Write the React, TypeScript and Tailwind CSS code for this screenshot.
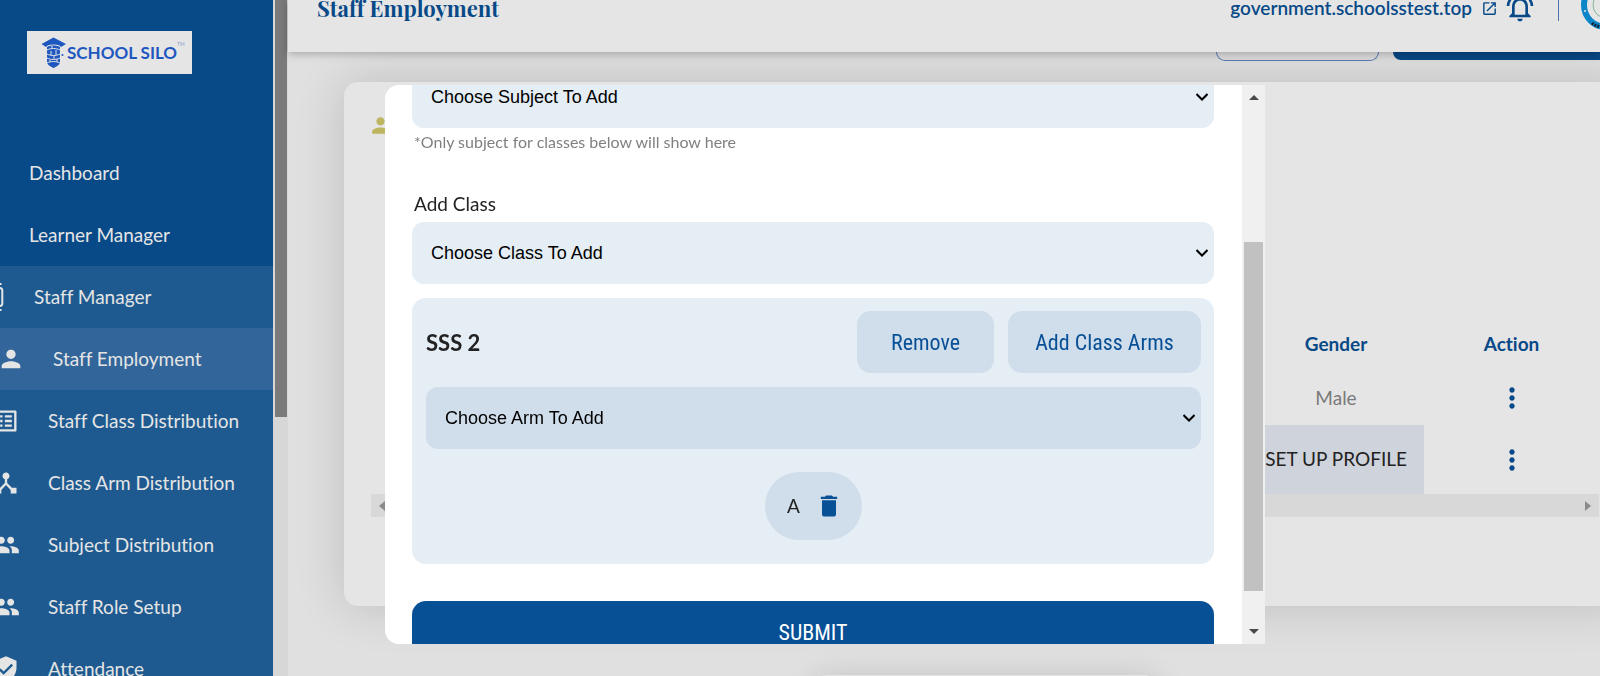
import type { ReactNode } from "react";
import {
  MdDelete,
  MdDeviceHub,
  MdGroup,
  MdMoreVert,
  MdOpenInNew,
  MdOutlineListAlt,
  MdOutlineNotificationsActive,
  MdPerson,
  MdVerifiedUser,
} from "react-icons/md";
import clsx from "clsx";

type NavItem = {
  label: string;
  icon?: ReactNode;
  className: string;
};

function StaffIcon() {
  return (
    <svg viewBox="0 0 28 28" width="1em" height="1em" fill="none" stroke="currentColor" strokeWidth="2" aria-hidden="true">
      <rect x="4" y="5" width="22.3" height="18" rx="2.5" />
      <path d="M24.5 0v2M24.5 26v2M6 0v2M6 26v2" />
    </svg>
  );
}

const mainNav: NavItem[] = [
  { label: "Dashboard", className: "pl-[29px]" },
  { label: "Learner Manager", className: "pl-[29px]" },
];

const staffNav: NavItem[] = [
  { label: "Staff Manager", icon: <StaffIcon />, className: "-ml-[24px] gap-[30px]" },
  { label: "Staff Employment", icon: <MdPerson />, className: "-ml-[3px] gap-[28px] bg-[#32659a]" },
  { label: "Staff Class Distribution", icon: <MdOutlineListAlt />, className: "-ml-[8px] gap-[28px]" },
  { label: "Class Arm Distribution", icon: <MdDeviceHub />, className: "-ml-[8px] gap-[28px]" },
  { label: "Subject Distribution", icon: <MdGroup />, className: "-ml-[8px] gap-[28px]" },
  { label: "Staff Role Setup", icon: <MdGroup />, className: "-ml-[8px] gap-[28px]" },
  { label: "Attendance", icon: <MdVerifiedUser />, className: "-ml-[8px] gap-[28px]" },
];

function Logo() {
  return (
    <div className="flex h-[43px] w-[165px] items-center bg-[#e5e5e5] pl-[14px] text-[#1f57c0]">
      <svg viewBox="0 0 26 32" className="h-8 w-[26px] shrink-0" fill="currentColor" aria-hidden="true">
        <path d="M12.500 0.500 0.500 7l4.500 3 1.500-1.500c4-1.500 8-1.500 12 0L20 10l5-3z" />
        <path d="M6 10c4-2 9-2 13 0v15c0 3-3.500 4.500-6.500 6C9.500 29.500 6 28 6 25z" />
        <g stroke="#e5e5e5" fill="none">
          <path d="M6 13c4-2 9-2 13 0M6 17c4 2 9 2 13 0M6 21c4 2 9 2 13 0M6 26c4-2 9-2 13 0" />
          <path d="M11 9v3M15 13v5M10 14v4M13 19v3M9 23v2M16 22v3" />
        </g>
        <circle cx="21.500" cy="18" r="1" />
      </svg>
      <span className="text-[17px] font-bold">SCHOOL SILO</span>
      <span className="mb-4 text-[5px] opacity-50">TM</span>
    </div>
  );
}

function NavRow({ item }: { item: NavItem }) {
  return (
    <li>
      <a href="#" className={clsx("flex h-[62px] items-center whitespace-nowrap", item.className)}>
        {item.icon && <span className="text-[28px]">{item.icon}</span>}
        {item.label}
      </a>
    </li>
  );
}

function Sidebar() {
  return (
    <aside className="flex w-[288px] shrink-0 bg-[#d7d7d7]">
      <nav className="w-[273px] overflow-hidden bg-[#084988] text-[19px] text-[#e5e5e5]">
        <div className="h-[142px] pt-[31px] pl-[27px]">
          <Logo />
        </div>
        <ul>
          {mainNav.map((item) => (
            <NavRow key={item.label} item={item} />
          ))}
        </ul>
        <ul className="bg-[#1e5a90]">
          {staffNav.map((item) => (
            <NavRow key={item.label} item={item} />
          ))}
        </ul>
      </nav>
      <div className="ml-[2px] h-[417px] w-3 bg-[#7a7a7a]" />
    </aside>
  );
}

function Header() {
  return (
    <header className="relative z-10 flex h-[52px] shrink-0 justify-between bg-[#e5e5e5] pl-[29px] text-[#084988] shadow-[0_2px_8px_rgba(0,0,0,0.25)]">
      <h1 className="-mt-[8px] font-['Playfair_Display','Liberation_Serif',serif] text-[22px] leading-[32px] font-bold">
        Staff Employment
      </h1>
      <div className="-mt-[8px] flex h-8 items-center">
        <a href="#" className="flex items-center gap-[9px] text-[19px] font-semibold">
          government.schoolsstest.top
          <MdOpenInNew className="text-[17px]" />
        </a>
        <MdOutlineNotificationsActive className="ml-[6px] text-[32px]" />
        <div className="ml-[22px] h-[26px] w-px bg-[#4f74ad]" />
        <svg viewBox="0 0 50 50" className="-mt-[6px] -mr-[31px] ml-[22px] h-[50px] w-[50px]" aria-hidden="true">
          <circle cx="25" cy="25" r="22" fill="#e5e5e5" stroke="#0c86c8" strokeWidth="6" />
          <circle cx="25" cy="25" r="13" fill="none" stroke="#7fb59a" />
          <circle cx="4" cy="31" r="1" fill="#e5e5e5" />
          <path d="M11 43c2 2 5 3 8 4" fill="none" stroke="#123" strokeWidth="3" strokeDasharray="2 1" />
        </svg>
      </div>
    </header>
  );
}

function RowActions() {
  return (
    <button type="button" aria-label="Actions" className="align-middle text-[32px] text-[#084988]">
      <MdMoreVert />
    </button>
  );
}

function StaffCard() {
  return (
    <section className="-mr-[26px] ml-14 h-[524px] shrink-0 rounded-[14px] bg-[#e5e5e5] pt-[31px] pr-[27px] pl-[27px] shadow-[0_0_50px_rgba(0,0,0,0.16)]">
      <MdPerson className="-ml-[3px] text-[25px] text-[#bdb55f]" />
      <div className="mt-[183px] flex justify-end">
        <table className="w-[399px] table-fixed text-center text-[19px]">
          <thead>
            <tr className="h-[50px] text-[#084988]">
              <th className="w-[224px] pb-[3px] pl-[48px]">Gender</th>
              <th className="pb-[3px]">Action</th>
            </tr>
          </thead>
          <tbody>
            <tr className="h-[54px]">
              <td className="pl-[48px] text-[#7a7a7a]">Male</td>
              <td>
                <RowActions />
              </td>
            </tr>
            <tr className="h-[69px]">
              <td className="bg-[#cfd4dc] pr-[17px] text-right text-[#222]">SET UP PROFILE</td>
              <td>
                <RowActions />
              </td>
            </tr>
          </tbody>
        </table>
      </div>
      <div className="flex h-[23px] items-center justify-between bg-[#d8d8d8] px-2 text-[#8b8b8b]">
        <span className="border-y-[5px] border-r-[6px] border-y-transparent" />
        <span className="border-y-[5px] border-l-[6px] border-y-transparent" />
      </div>
    </section>
  );
}

type SelectFieldProps = {
  id: string;
  label: string;
  placeholder: string;
  hideLabel?: boolean;
  className?: string;
};

function SelectField({ id, label, placeholder, hideLabel, className }: SelectFieldProps) {
  return (
    <div className="flex flex-col">
      <label htmlFor={id} className={hideLabel ? "sr-only" : "pl-[2px] leading-[36px]"}>
        {label}
      </label>
      <div className="relative">
        <select
          id={id}
          className={clsx(
            "block h-[62px] w-full appearance-none rounded-xl px-[19px] font-['Liberation_Sans',sans-serif] text-[18px] text-black",
            className
          )}
        >
          <option>{placeholder}</option>
        </select>
        <svg
          viewBox="0 0 12 8"
          className="pointer-events-none absolute top-[27px] right-[6px] h-2 w-3"
          fill="none"
          stroke="black"
          strokeWidth="2"
          aria-hidden="true"
        >
          <path d="M0.5 1 6 6.5 11.5 1" />
        </svg>
      </div>
    </div>
  );
}

function ClassBox() {
  return (
    <div className="mt-[14px] h-[266px] shrink-0 rounded-[14px] bg-[#e5edf5] p-[13px] pl-[14px]">
      <div className="mb-[14px] flex items-center gap-[14px] font-['Roboto_Condensed','Liberation_Sans_Narrow',sans-serif] text-[22px] text-[#085096]">
        <h2 className="mr-auto font-[Lato,sans-serif] font-bold text-[#222]">SSS 2</h2>
        <button type="button" className="h-[62px] w-[137px] rounded-[14px] bg-[#d0ddea]">
          Remove
        </button>
        <button type="button" className="h-[62px] w-[193px] rounded-[14px] bg-[#d0ddea]">
          Add Class Arms
        </button>
      </div>
      <SelectField id="arm" label="Arm" placeholder="Choose Arm To Add" hideLabel className="bg-[#d0ddea]" />
      <div className="mt-[23px] flex justify-center">
        <div className="flex h-[68px] items-center gap-[15px] rounded-full bg-[#d0ddea] pr-[19px] pl-[22px]">
          A
          <button type="button" aria-label="Remove arm A" className="text-[28px] text-[#085096]">
            <MdDelete />
          </button>
        </div>
      </div>
    </div>
  );
}

function AssignModal() {
  return (
    <div className="fixed inset-0 z-20 flex pt-[85px] pr-[335px] pb-8 pl-[385px]">
      <div role="dialog" aria-label="Assign subject and class" className="flex flex-1 overflow-hidden rounded-l-[14px] bg-white">
        <form className="-mt-[19px] flex flex-1 flex-col pr-7 pl-[27px] text-[19px] text-[#222]">
          <SelectField id="subject" label="Add Subject" placeholder="Choose Subject To Add" hideLabel className="bg-[#e5edf5]" />
          <p className="mb-[30px] pl-[2px] text-[16px] leading-[28px] text-[#808080]">
            *Only subject for classes below will show here
          </p>
          <SelectField id="class" label="Add Class" placeholder="Choose Class To Add" className="bg-[#e5edf5]" />
          <ClassBox />
          <button
            type="submit"
            className="mt-[37px] h-[62px] shrink-0 rounded-[14px] bg-[#085096] font-['Roboto_Condensed','Liberation_Sans_Narrow',sans-serif] text-[22px] text-white"
          >
            SUBMIT
          </button>
        </form>
        <div className="flex w-[23px] flex-col items-center bg-[#f0f0f0] text-[#4a4a4a]">
          <span className="mt-[10px] border-x-[5px] border-b-[5px] border-x-transparent" />
          <div className="mt-[142px] h-[349px] w-[19px] bg-[#c1c1c1]" />
          <span className="mt-[38px] border-x-[5px] border-t-[5px] border-x-transparent" />
        </div>
      </div>
    </div>
  );
}

export default function App() {
  return (
    <div className="flex h-screen overflow-hidden bg-[#e0e0e0] font-[Lato,sans-serif] [font-variant-ligatures:none]">
      <Sidebar />
      <main className="flex min-w-0 flex-1 flex-col">
        <Header />
        <div className="mb-[21px] flex h-[9px] shrink-0 justify-end gap-[14px]">
          <button
            type="button"
            aria-label="Filter staff"
            className="w-[163px] rounded-b-[14px] border border-t-0 border-[#5a7fb5]"
          />
          <button type="button" aria-label="Add staff" className="-mr-2 h-2 w-[215px] rounded-bl-lg bg-[#084988]" />
        </div>
        <StaffCard />
        <div className="-mr-[26px] ml-14 flex shrink-0 justify-center pt-[69px]">
          <div className="h-16 w-[345px] rounded-[14px] bg-[#e5e5e5] shadow-[0_0_30px_rgba(0,0,0,0.12)]" />
        </div>
      </main>
      <AssignModal />
    </div>
  );
}
